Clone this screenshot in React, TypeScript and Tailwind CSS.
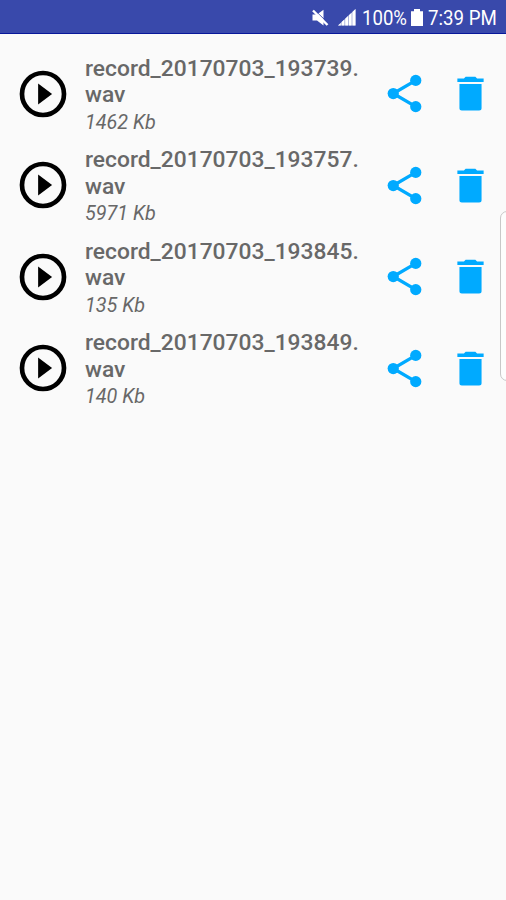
const records = [
  { name: 'record_20170703_193739.', size: '1462 Kb' },
  { name: 'record_20170703_193757.', size: '5971 Kb' },
  { name: 'record_20170703_193845.', size: '135 Kb' },
  { name: 'record_20170703_193849.', size: '140 Kb' },
];

function StatusBar() {
  return (
    <header className="flex h-[34px] items-center border-b border-[#08189a] bg-[#3949ab] pl-[311px] pt-[2px] text-[20px] leading-6 text-white">
      <svg className="h-[18px] w-[18px] shrink-0" viewBox="0 0 18 18" fill="currentColor">
        <path d="M1.5 5.5h4.5L12.5 .8V16.5l-6.5-5H1.5z" />
        <path d="M3.5 1l14 13.5" stroke="#3949ab" strokeWidth="1" />
        <path d="M2 1.5l14.5 14.5" stroke="currentColor" strokeWidth="2.4" />
      </svg>
      <svg className="ml-[9px] h-[18px] w-[18px] shrink-0" viewBox="0 0 18 18" fill="currentColor">
        <path d="M0 16.5L17.5 0v16.5z" fillOpacity="0.5" />
        <path d="M0 16.5l2.8-2.6v2.6zM3.6 16.5v-3.4l2.8-2.6v6zM7.2 16.5V9.7L10 7.1v9.4zM10.8 16.5V6.3l2.8-2.6v12.8zM14.4 16.5V2.9L17.5 0v16.5z" />
      </svg>
      <span className="ml-[6px] w-[45px] shrink-0 whitespace-nowrap"><span className="inline-block origin-left scale-x-[0.93]">100%</span></span>
      <svg className="ml-[4px] h-[18px] w-[12px] shrink-0" viewBox="0 0 12 18" fill="currentColor">
        <path d="M3 0h6v2.2h3V17H0V2.2h3z" />
      </svg>
      <span className="ml-[5px] shrink-0 whitespace-nowrap"><span className="inline-block origin-left scale-x-[0.935]">7:39 PM</span></span>
    </header>
  );
}

function RecordRow({ name, size }: { name: string; size: string }) {
  return (
    <li className="flex h-[91.4px] items-center">
      <svg className="ml-[14.5px] h-14 w-14 shrink-0" viewBox="0 0 24 24" fill="#000">
        <circle cx="12" cy="12" r="9" fill="none" stroke="#000" strokeWidth="2" />
        <path d="M9.9 16.5l6-4.5-6-4.5z" />
      </svg>
      <div className="ml-[14.5px] w-[296.5px] shrink-0 pt-[5px] text-[#686868]">
        <p className="text-[22.8px] font-medium leading-[26.5px]">
          {name}
          <br />
          wav
        </p>
        <p className="text-[19.8px] italic leading-[28px]">{size}</p>
      </div>
      <svg className="h-[45px] w-[45px] shrink-0" viewBox="0 0 24 24" fill="#00aaff">
        <path d="M18 5L6 12l12 7" fill="none" stroke="#00aaff" strokeWidth="1.8" />
        <circle cx="18" cy="5" r="3" />
        <circle cx="6" cy="12" r="3" />
        <circle cx="18" cy="19" r="3" />
      </svg>
      <svg className="ml-[21px] h-[45px] w-[45px] shrink-0" viewBox="0 0 24 24" fill="#00aaff">
        <path d="M6.1 19.8c0 .8.5 1.2 1.3 1.2h9.2c.8 0 1.3-.4 1.3-1.2V6.9H6.1zM19 4h-3.5l-.9-.9H9.4L8.5 4H5v1.9h14z" />
      </svg>
    </li>
  );
}

export default function App() {
  return (
    <div className="relative h-[900px] w-[506px] overflow-hidden bg-[#fafafa] font-['Roboto',sans-serif]">
      <StatusBar />
      <ul className="pt-[14.2px]">
        {records.map((record) => (
          <RecordRow key={record.name} name={record.name} size={record.size} />
        ))}
      </ul>
      <div className="absolute -right-3 top-[211px] h-[170px] w-[18px] rounded-[7px] border border-[#c8c8c8] bg-[#fdfdfd]" />
    </div>
  );
}
